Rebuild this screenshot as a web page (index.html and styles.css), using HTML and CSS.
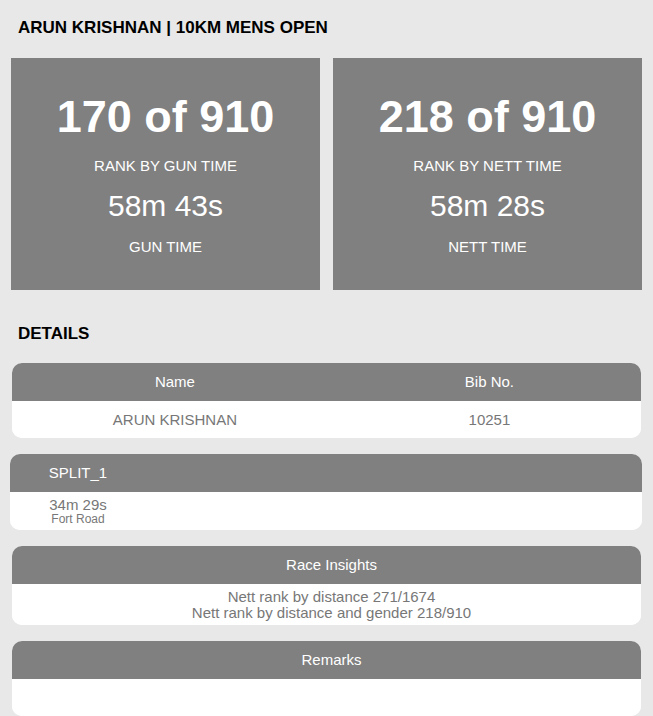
FILE: index.html
```html
<!DOCTYPE html>
<html lang="en">
<head>
  <meta charset="UTF-8" />
  <title>Result - Arun Krishnan</title>
  <meta name="viewport" content="width=device-width, initial-scale=1.0"/>
  <link rel="stylesheet" href="styles.css">
</head>
<body>

  <div class="page">
    <h1 class="runner-title">ARUN KRISHNAN | 10KM MENS OPEN</h1>

    <div class="rank-cards">
      <div class="rank-card">
        <div class="rank-big">170 of 910</div>
        <div class="rank-label">RANK BY GUN TIME</div>
        <div class="rank-time">58m 43s</div>
        <div class="rank-label">GUN TIME</div>
      </div>
      <div class="rank-card">
        <div class="rank-big">218 of 910</div>
        <div class="rank-label">RANK BY NETT TIME</div>
        <div class="rank-time">58m 28s</div>
        <div class="rank-label">NETT TIME</div>
      </div>
    </div>

    <h2 class="section-title">DETAILS</h2>

    <div class="box">
      <div class="box-head cols">
        <div class="col-name">Name</div>
        <div class="col-bib">Bib No.</div>
      </div>
      <div class="box-body cols row">
        <div class="col-name">ARUN KRISHNAN</div>
        <div class="col-bib">10251</div>
      </div>
    </div>

    <div class="box box-split">
      <div class="box-head">
        <div class="split-col">SPLIT_1</div>
      </div>
      <div class="box-body split-body">
        <div class="split-col">
          <div class="split-time">34m 29s</div>
          <div class="split-place">Fort Road</div>
        </div>
      </div>
    </div>

    <div class="box">
      <div class="box-head centered">Race Insights</div>
      <div class="box-body centered insights">
        <div>Nett rank by distance 271/1674</div>
        <div>Nett rank by distance and gender 218/910</div>
      </div>
    </div>

    <div class="box">
      <div class="box-head centered">Remarks</div>
      <div class="box-body remarks"></div>
    </div>
  </div>

</body>
</html>
```

FILE: styles.css
```css
body {
  margin: 0;
  background: #e8e8e8;
  font-family: 'Liberation Sans', Arial, sans-serif;
  color: #000;
}

.page {
  padding: 18px 11px 0 11px;
}

.runner-title {
  margin: 0 0 20px 7px;
  font-size: 17px;
  line-height: 20px;
  font-weight: bold;
}

.rank-cards {
  display: flex;
  gap: 13px;
}

.rank-card {
  flex: 1;
  background: #808080;
  color: #fff;
  text-align: center;
  padding: 33px 0 34px;
}

.rank-big {
  font-size: 45px;
  line-height: 52px;
  font-weight: bold;
}

.rank-label {
  font-size: 15px;
  line-height: 18px;
  margin-top: 14px;
}

.rank-time {
  font-size: 30px;
  line-height: 34px;
  margin-top: 14px;
}

.rank-time + .rank-label {
  margin-top: 15px;
}

.section-title {
  margin: 34px 0 19px 7px;
  font-size: 17px;
  line-height: 20px;
  font-weight: bold;
}

.box {
  margin: 0 1px 16px 1px;
  border-radius: 10px;
  overflow: hidden;
  background: #fff;
}

.box-split {
  margin-left: -1px;
  margin-right: 0;
}

.box-head {
  background: #808080;
  color: #fff;
  font-size: 15px;
  height: 38px;
  line-height: 38px;
}

.box-body {
  background: #fff;
  color: #777;
  font-size: 15px;
}

.centered {
  text-align: center;
  padding-left: 10px;
}

.cols {
  display: flex;
}

.col-name {
  width: 51.8%;
  text-align: center;
}

.col-bib {
  flex: 1;
  text-align: center;
}

.row {
  height: 37px;
  line-height: 37px;
}

.split-col {
  width: 136px;
  text-align: center;
}

.split-body {
  height: 38px;
  padding-top: 5px;
  box-sizing: border-box;
}

.split-time {
  line-height: 16px;
}

.split-place {
  font-size: 12px;
  line-height: 13px;
}

.insights {
  line-height: 16px;
  padding-top: 5px;
  padding-bottom: 4px;
}

.remarks {
  height: 37px;
}
```
